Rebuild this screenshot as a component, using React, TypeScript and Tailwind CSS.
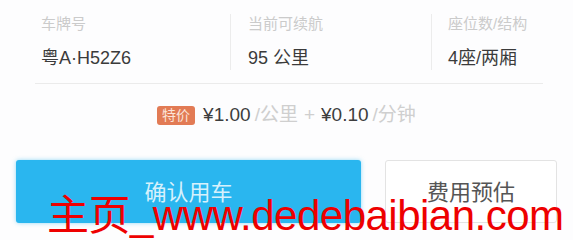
const font = { fontFamily: '"Liberation Sans", "Noto Sans CJK SC", sans-serif' };

function InfoCell({
  label,
  value,
  className,
}: {
  label: string;
  value: string;
  className: string;
}) {
  return (
    <div className={className}>
      <div className="text-[15px] leading-[20px] text-[#cbcbcb]">{label}</div>
      <div className="mt-[13px] text-[18px] leading-[22px] text-[#3b3b3b]">
        {value}
      </div>
    </div>
  );
}

export default function App() {
  return (
    <div
      className="relative w-[573px] h-[240px] overflow-hidden bg-[#fdfdfe]"
      style={font}
    >
      <div className="flex pt-[14px]">
        <InfoCell
          label="车牌号"
          value="粤A·H52Z6"
          className="w-[231px] pl-[41px] h-[56px] border-r border-[#ececec]"
        />
        <InfoCell
          label="当前可续航"
          value="95 公里"
          className="w-[201px] pl-[17px] h-[56px] border-r border-[#ececec]"
        />
        <InfoCell label="座位数/结构" value="4座/两厢" className="pl-[16px]" />
      </div>

      <div className="ml-[35px] mt-[13px] w-[508px] h-px bg-[#ebebeb]" />

      <div className="mt-[21px] flex items-center justify-center h-[20px] text-[19px] leading-[20px]">
        <span className="mr-[8px] flex h-[19px] w-[38px] items-center justify-center rounded-[3px] bg-[#e27b55] text-[14px] text-[#fbe3d8]">
          特价
        </span>
        <span className="text-[#3d3d3d]">¥1.00</span>
        <span className="ml-[4px] text-[#cfcfcf]">/公里</span>
        <span className="mx-[6px] text-[#cfcfcf]">+</span>
        <span className="text-[#3d3d3d]">¥0.10</span>
        <span className="ml-[4px] text-[#cfcfcf]">/分钟</span>
      </div>

      <div className="mt-[35px] flex pl-[16px]">
        <button className="flex h-[63px] w-[345px] items-center justify-center rounded-[3px] bg-[#2ab6ef] pt-[2px] text-[22px] text-[#d6f1fc] shadow-[0_0_4px_rgba(42,182,239,0.5)]">
          确认用车
        </button>
        <button className="ml-[24px] flex h-[63px] w-[172px] items-center justify-center rounded-[3px] border border-[#e3e3e3] bg-white pt-[2px] text-[22px] text-[#555555]">
          费用预估
        </button>
      </div>

      <div className="absolute left-[47px] top-[192px] whitespace-nowrap text-[42px] leading-[48px] tracking-[-0.5px] text-[#ee0000]">
        主页_www.dedebaibian.com
      </div>
    </div>
  );
}
